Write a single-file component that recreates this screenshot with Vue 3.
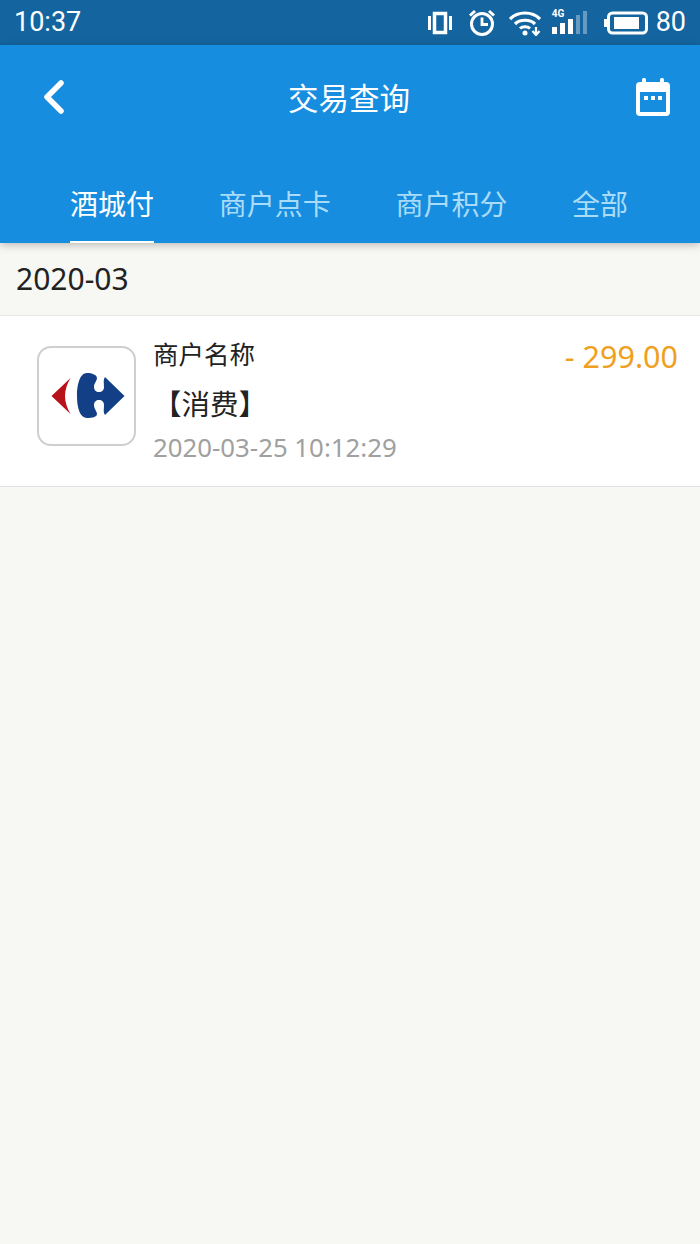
<template>
  <div class="page">
    <div class="status-bar">
      <span class="time">10:37</span>
      <div class="status-icons">
        <svg class="ic-vibrate" width="24" height="24" viewBox="0 0 24 24">
          <rect x="6.500" y="2.500" width="11" height="19" fill="none" stroke="#fff" stroke-width="3.500" />
          <rect x="0" y="5" width="3" height="14" fill="#fff" />
          <rect x="21" y="5" width="3" height="14" fill="#fff" />
        </svg>
        <svg class="ic-alarm" width="28" height="28" viewBox="0 0 28 28">
          <circle cx="14" cy="15" r="10.500" fill="none" stroke="#fff" stroke-width="3" />
          <path d="M14 8.500V15.500H20" fill="none" stroke="#fff" stroke-width="2.800" />
          <path d="M2 6.500 7 2M26 6.500 21 2" fill="none" stroke="#fff" stroke-width="3" />
        </svg>
        <svg class="ic-wifi" width="32" height="26" viewBox="0 0 32 26">
          <path d="M1 9C9 1 23 1 31 9" fill="none" stroke="#fff" stroke-width="3.200" />
          <path d="M6 14C11 9 21 9 26 14" fill="none" stroke="#fff" stroke-width="3.200" />
          <path d="M11 18.500C13.500 16 18.500 16 21 18.500" fill="none" stroke="#fff" stroke-width="3" />
          <circle cx="16" cy="23" r="2.500" fill="#fff" />
          <path d="M27 17V24M23.500 21 27 25 30.500 21" fill="none" stroke="#fff" stroke-width="2.200" />
        </svg>
        <div class="signal">
          <span class="net">4G</span>
          <svg width="36" height="26" viewBox="0 0 36 26">
            <rect x="0" y="17" width="5" height="7" fill="#fff" />
            <rect x="8" y="13" width="5" height="11" fill="#fff" />
            <rect x="16" y="9" width="5" height="15" fill="#fff" />
            <rect x="24" y="5" width="4" height="19" fill="#fff" opacity="0.35" />
            <rect x="31" y="1" width="4" height="23" fill="#fff" opacity="0.35" />
          </svg>
        </div>
        <svg class="ic-battery" width="44" height="24" viewBox="0 0 44 24">
          <rect x="0" y="8" width="3" height="8" fill="#fff" />
          <rect x="4.500" y="2" width="38" height="20" rx="4" fill="none" stroke="#fff" stroke-width="3" />
          <rect x="10" y="6" width="25" height="12" fill="#fff" />
        </svg>
        <span class="battery-num">80</span>
      </div>
    </div>

    <div class="header">
      <div class="nav">
        <svg class="back" width="26" height="36" viewBox="0 0 26 36">
          <path d="M21 4 7 18 21 32" fill="none" stroke="#fff" stroke-width="5.500" stroke-linecap="round" stroke-linejoin="round" />
        </svg>
        <span class="title">交易查询</span>
        <svg class="calendar" width="36" height="40" viewBox="0 0 36 40">
          <rect x="1" y="5" width="34" height="34" rx="4" fill="#fff" />
          <rect x="7" y="1" width="4" height="7" rx="1.500" fill="#fff" />
          <rect x="25" y="1" width="4" height="7" rx="1.500" fill="#fff" />
          <rect x="5" y="15" width="26" height="20" fill="#178ddf" />
          <rect x="9" y="19" width="4" height="4" fill="#fff" />
          <rect x="16" y="19" width="4" height="4" fill="#fff" />
          <rect x="23" y="19" width="4" height="4" fill="#fff" />
        </svg>
      </div>
      <div class="tabs">
        <div v-for="(t, i) in tabs" :key="t" class="tab" :class="{ active: i === 0 }">{{ t }}</div>
      </div>
    </div>

    <div class="month">2020-03</div>

    <div class="record">
      <div class="logo">
        <svg width="80" height="50" viewBox="0 0 80 50">
          <path d="M4.500 25 23.500 7C20 13 18 19 18 25 18 31 20 37 23.500 43Z" fill="#b8121b" />
          <path d="M40 2C33 2 30 13 30 25 30 37 33 47 40 47 45 47 50 46 50 43 50 40 47 38 47 34 47 31 49 29 52 29 55 29 57 31 57 34 57 38 56 41 58 44L77.500 25 58 6C56 9 57 12 57 16 57 19 55 21 52 21 49 21 47 19 47 16 47 12 50 10 50 7 50 4 45 2 40 2Z" fill="#123f86" />
        </svg>
      </div>
      <div class="info">
        <div class="name">商户名称</div>
        <div class="kind">【消费】</div>
        <div class="date">2020-03-25 10:12:29</div>
      </div>
      <div class="amount">- 299.00</div>
    </div>
  </div>
</template>

<script setup>
const tabs = ["酒城付", "商户点卡", "商户积分", "全部"];
</script>

<style>
html,
body {
  background: #f7f8f4;
}
</style>

<style scoped>
.page {
  width: 700px;
  height: 1244px;
  overflow: hidden;
  background: #f7f8f4;
  font-family: "Noto Sans", "Noto Sans CJK SC", sans-serif;
}
.status-bar {
  height: 45px;
  background: #14659f;
  display: flex;
  align-items: center;
  justify-content: space-between;
  padding: 0 14px 0 14px;
  color: #fff;
}
.time {
  font-family: Roboto, sans-serif;
  font-size: 27px;
  margin-top: -2px;
}
.status-icons {
  display: flex;
  align-items: center;
}
.ic-vibrate {
  margin-right: 16px;
}
.ic-alarm {
  margin-right: 13px;
}
.ic-wifi {
  margin-right: 11px;
}
.signal {
  position: relative;
  width: 36px;
  height: 26px;
  margin-right: 16px;
}
.signal svg {
  display: block;
}
.net {
  position: absolute;
  left: 0;
  top: -2px;
  font-family: Roboto, sans-serif;
  font-size: 10px;
  font-weight: 700;
}
.battery-num {
  font-family: Roboto, sans-serif;
  font-size: 27px;
  margin-left: 8px;
  margin-top: -2px;
}
.header {
  height: 198px;
  background: #178ddf;
  box-shadow: 0 2px 8px rgba(0, 0, 0, 0.25);
  position: relative;
  box-sizing: border-box;
}
.nav {
  height: 106px;
  display: flex;
  align-items: center;
  justify-content: space-between;
  padding: 0 29px 2px 40px;
  box-sizing: border-box;
}
.title {
  color: #fff;
  font-size: 30.500px;
  margin-right: 3px;
}
.tabs {
  display: flex;
  gap: 64.700px;
  padding-left: 70px;
}
.tab {
  height: 92px;
  box-sizing: border-box;
  padding-top: 27px;
  font-size: 28px;
  line-height: 52px;
  color: #a9dcf8;
}
.tab.active {
  color: #fff;
  border-bottom: 2px solid #fff;
}
.month {
  height: 72px;
  line-height: 71px;
  padding-left: 16px;
  font-size: 30px;
  color: #222;
}
.record {
  height: 172px;
  box-sizing: border-box;
  background: #fff;
  border-top: 1px solid #e8e8e8;
  border-bottom: 1px solid #e2e2e2;
  display: flex;
  align-items: flex-start;
  padding: 30px 22px 0 37px;
}
.logo {
  width: 99px;
  height: 100px;
  box-sizing: border-box;
  border: 2px solid #cfcfcf;
  border-radius: 14px;
  display: flex;
  align-items: center;
  justify-content: center;
  flex-shrink: 0;
}
.info {
  margin-left: 17px;
  flex: 1;
}
.name {
  font-size: 25.500px;
  line-height: 30px;
  margin-top: -7px;
  color: #222;
}
.kind {
  font-size: 28.500px;
  line-height: 40px;
  margin-top: 15px;
  color: #222;
}
.date {
  font-size: 25.800px;
  line-height: 30px;
  margin-top: 8px;
  color: #a0a0a0;
}
.amount {
  font-size: 30.500px;
  line-height: 40px;
  margin-top: -10px;
  color: #f0a020;
}
</style>
